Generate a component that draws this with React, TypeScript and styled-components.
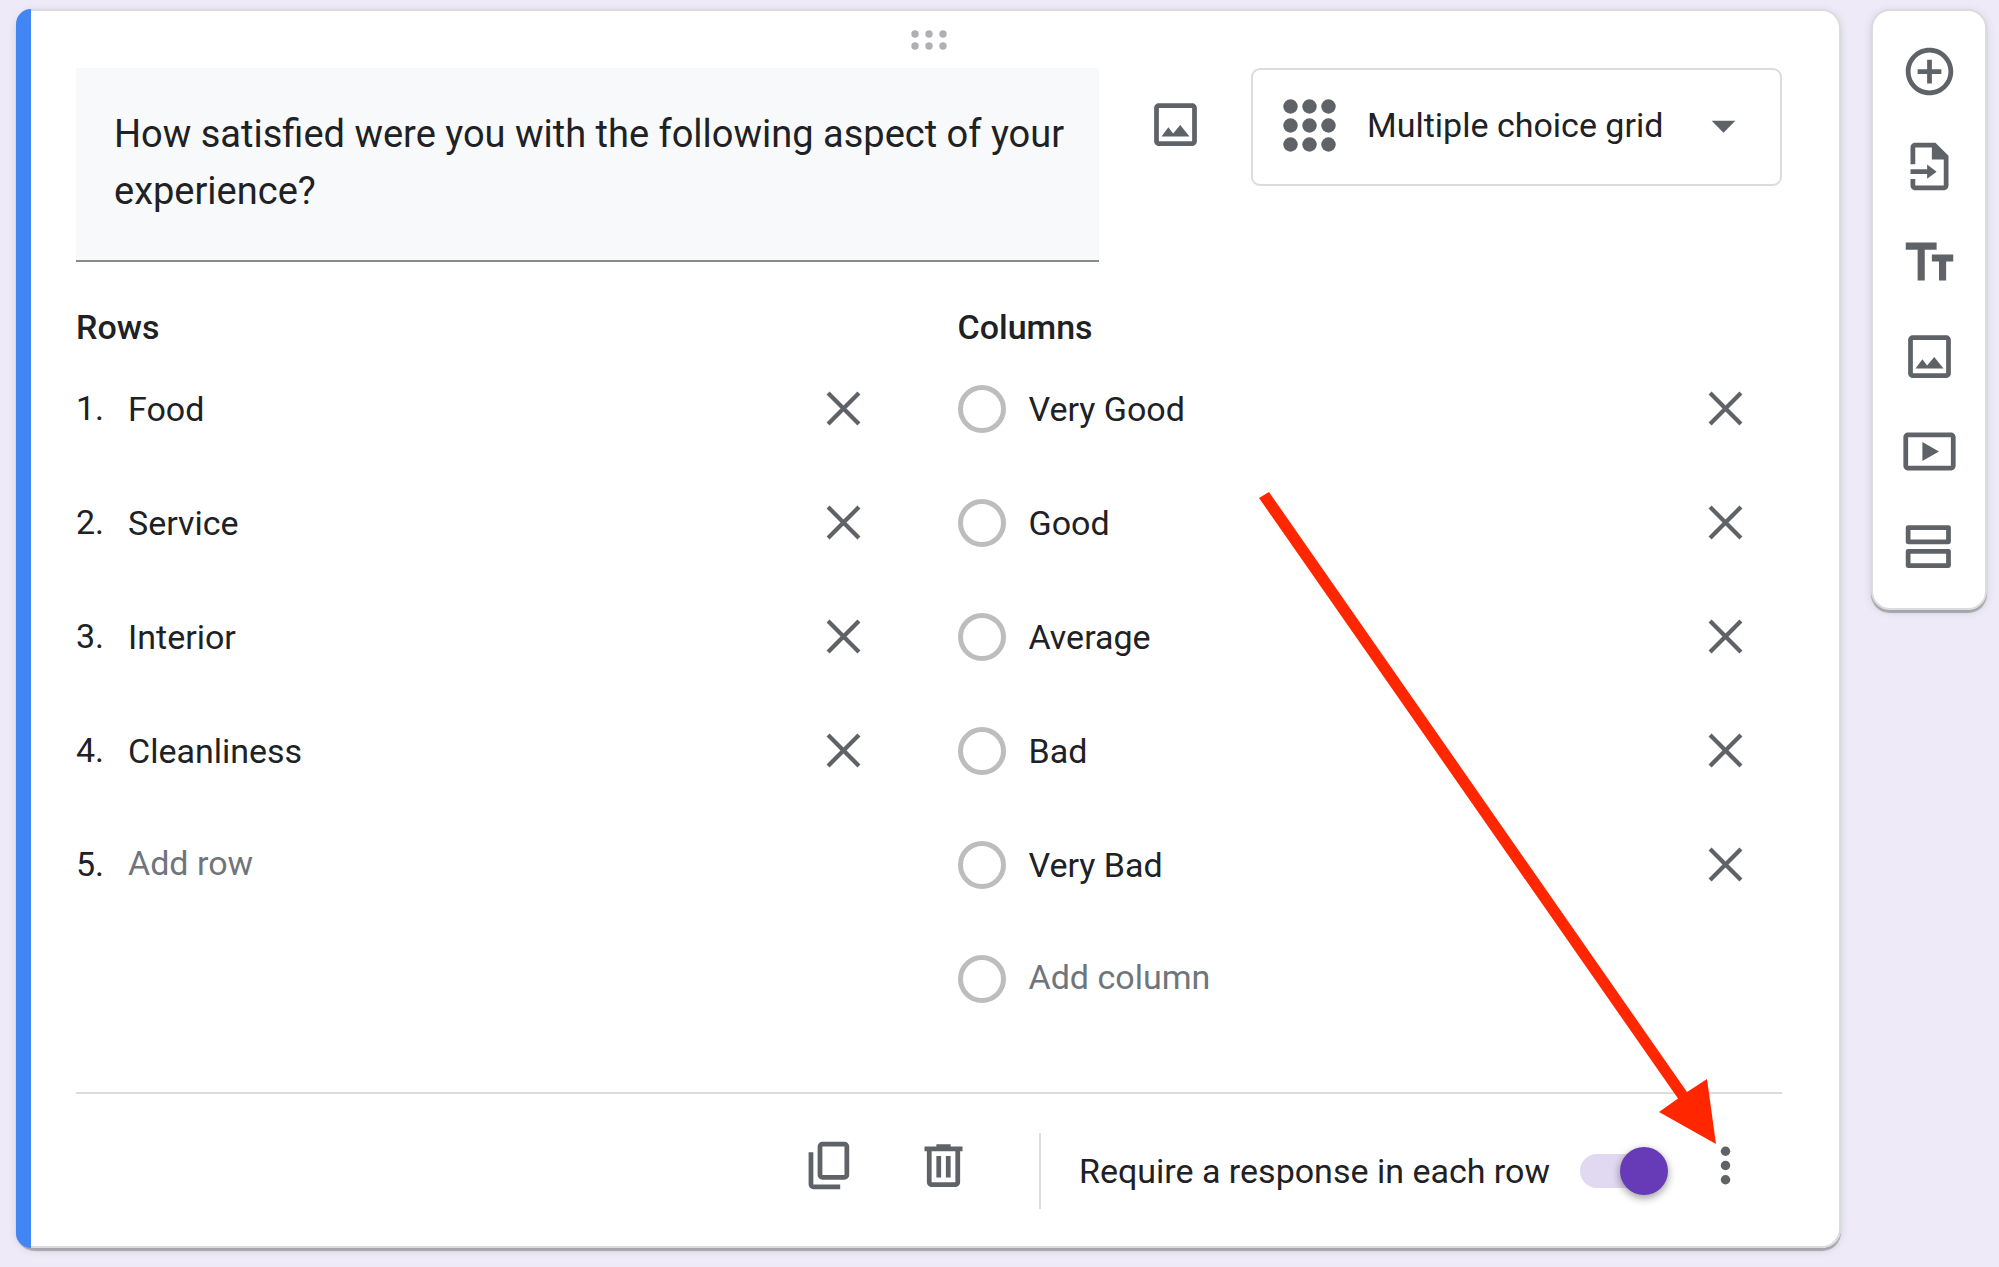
import React, { useState } from "react";
import styled, { createGlobalStyle } from "styled-components";

const ink = "#202124";
const iconGrey = "#5f6368";
const hint = "#70757a";
const line = "#dadce0";
const accent = "#673ab7";

const GlobalStyle = createGlobalStyle`
  *, *::before, *::after { box-sizing: border-box; }
  body {
    margin: 0;
    background: #eeeaf8;
    color: ${ink};
    font-family: Roboto, "Liberation Sans", sans-serif;
    font-size: 34px;
  }
  button, input, select, textarea { font: inherit; color: inherit; }
`;

const Page = styled.div`
  position: relative;
  display: flex;
  align-items: flex-start;
  gap: 30px;
  padding: 9px 12px 16px 16px;
`;

const Card = styled.main`
  display: flex;
  flex: 1;
  min-width: 0;
  border-radius: 19px;
  box-shadow: 0 3px 1px #a6a5ac, 0 2px 8px rgba(60, 64, 67, 0.15);
`;

const Stripe = styled.div`
  width: 15px;
  border-radius: 19px 0 0 19px;
  background: #4285f4;
`;

const CardBody = styled.div`
  flex: 1;
  min-width: 0;
  padding: 0 57px 0 45px;
  background: #fff;
  border: 2px solid ${line};
  border-left: 0;
  border-radius: 0 19px 19px 0;
`;

const DragHandle = styled.div`
  display: flex;
  align-items: center;
  justify-content: center;
  height: 57px;
`;

const Header = styled.div`
  display: flex;
  align-items: flex-start;
  gap: 19px;
`;

const Question = styled.textarea`
  display: block;
  flex: 1;
  min-width: 0;
  padding: 38px 19px 40px 38px;
  border: 0;
  border-bottom: 2px solid #87898d;
  border-radius: 0;
  background: #f8f9fa;
  font-size: 38px;
  line-height: 57px;
  resize: none;
  overflow: hidden;
  outline: none;
`;

const IconButton = styled.button`
  display: flex;
  flex: none;
  align-items: center;
  justify-content: center;
  width: 114px;
  height: 114px;
  padding: 0 0 2px;
  border: 0;
  background: none;
  color: ${iconGrey};
  cursor: pointer;
`;

const TypePicker = styled.div`
  display: grid;
  grid-template-columns: 114px 1fr;
  align-items: center;
  width: 531px;
  height: 118px;
  padding-bottom: 4px;
  border: 2px solid ${line};
  border-radius: 9px;
  color: ${iconGrey};

  > svg { grid-row: 1; pointer-events: none; }
  > svg:first-child { grid-column: 1; margin-left: 28px; }
  > svg:last-child { grid-column: 2; justify-self: end; margin-right: 28px; }
`;

const TypeSelect = styled.select`
  grid-row: 1;
  grid-column: 1 / -1;
  height: 100%;
  padding: 0 90px 0 114px;
  border: 0;
  background: transparent;
  color: ${ink};
  appearance: none;
  outline: none;
`;

const Lists = styled.div`
  display: grid;
  grid-template-columns: 1fr 1fr;
  gap: 57px;
  padding-top: 41px;
`;

const Heading = styled.h2`
  margin: 0;
  font-size: 34px;
  line-height: 49px;
  font-weight: 500;
`;

const List = styled.ul`
  margin: 0;
  padding: 0;
  list-style: none;
`;

const Item = styled.li`
  display: flex;
  align-items: center;
  height: 114px;
`;

const Num = styled.span`
  width: 52px;
  padding-bottom: 2px;
`;

const Radio = styled.input`
  appearance: none;
  flex: none;
  width: 48px;
  height: 48px;
  margin: 0 23px 0 0;
  border: 5px solid #bdbdbd;
  border-radius: 50%;
`;

const OptionInput = styled.input`
  flex: 1;
  min-width: 0;
  height: 57px;
  padding: 0;
  border: 0;
  background: none;
  outline: none;
`;

const AddButton = styled.button`
  padding: 0 0 4px;
  border: 0;
  background: none;
  color: ${hint};
  cursor: pointer;
`;

const Footer = styled.footer`
  display: flex;
  align-items: flex-start;
  justify-content: flex-end;
  margin-top: 56px;
  padding: 15px 0 13px;
  border-top: 2px solid ${line};
`;

const Require = styled.label`
  display: flex;
  align-items: center;
  height: 124px;
  margin-left: 38px;
  cursor: pointer;

  &::before {
    content: "";
    width: 2px;
    height: 76px;
    margin-right: 38px;
    background: ${line};
  }
`;

const Toggle = styled.input`
  appearance: none;
  display: flex;
  align-items: center;
  width: 88px;
  height: 48px;
  margin: 0 0 0 30px;
  cursor: pointer;

  &::before {
    content: "";
    width: 83px;
    height: 34px;
    border-radius: 17px;
    background: #e1d8f1;
  }
  &::after {
    content: "";
    width: 48px;
    height: 48px;
    margin-left: -83px;
    border-radius: 50%;
    background: #fafafa;
    box-shadow: 0 3px 8px rgba(0, 0, 0, 0.4);
  }
  &:checked::after { margin-left: -43px; background: ${accent}; }
`;

const Toolbar = styled.aside`
  display: flex;
  flex-direction: column;
  gap: 38px;
  align-items: center;
  width: 116px;
  padding: 33px 0 32px;
  border: 2px solid ${line};
  border-radius: 19px;
  background: #fff;
  box-shadow: 0 3px 1px #a6a5ac, 0 2px 8px rgba(60, 64, 67, 0.15);
`;

const ToolButton = styled(IconButton)`
  width: 57px;
  height: 57px;
`;

const Arrow = styled.svg`
  position: absolute;
  top: 492px;
  right: 282px;
  pointer-events: none;
`;

const Icon = ({ children }: { children: React.ReactNode }) => (
  <svg width="57" height="57" viewBox="0 0 24 24" fill="currentColor" aria-hidden="true">
    {children}
  </svg>
);

const ImageIcon = () => (
  <Icon>
    <path d="M19 5v14H5V5h14m0-2H5c-1.100 0-2 .9-2 2v14c0 1.100.9 2 2 2h14c1.100 0 2-.9 2-2V5c0-1.100-.9-2-2-2z" />
    <path d="M14 12.200l-3 3.600-2-2.600L6.100 17h11.800z" />
  </Icon>
);

const CloseIcon = () => (
  <Icon>
    <path d="M5.500 5.500l13 13M18.500 5.500l-13 13" stroke="currentColor" strokeWidth="1.800" />
  </Icon>
);

const DropIcon = () => (
  <Icon>
    <path d="M7 10l5 5 5-5z" />
  </Icon>
);

const GridIcon = () => (
  <Icon>
    {[4, 12, 20].map((y) => [4, 12, 20].map((x) => <circle key={`${x}-${y}`} cx={x} cy={y} r="3.050" />))}
  </Icon>
);

const MoreIcon = () => (
  <Icon>
    {[6, 12, 18].map((y) => <circle key={y} cx="12" cy={y} r="2" />)}
  </Icon>
);

const CopyIcon = () => (
  <Icon>
    <path
      fillRule="evenodd"
      d="M9 2h9.300a2 2 0 0 1 2 2v12a2 2 0 0 1-2 2H9a2 2 0 0 1-2-2V4a2 2 0 0 1 2-2zm0 2v12h9.300V4z"
    />
    <path d="M3.200 6.400h2V20h11.300v2H5.200a2 2 0 0 1-2-2z" />
  </Icon>
);

const TrashIcon = () => (
  <Icon>
    <path d="M15 4V3H9v1H4v2h1v13c0 1.100.9 2 2 2h10c1.100 0 2-.9 2-2V6h1V4h-5zm2 15H7V6h10v13z" />
    <path d="M9 8h2v9H9zM13 8h2v9h-2z" />
  </Icon>
);

const tools = [
  {
    label: "Add question",
    icon: (
      <Icon>
        <path d="M13 7h-2v4H7v2h4v4h2v-4h4v-2h-4V7zm-1-5C6.480 2 2 6.480 2 12s4.480 10 10 10 10-4.480 10-10S17.520 2 12 2zm0 18c-4.410 0-8-3.590-8-8s3.590-8 8-8 8 3.590 8 8-3.590 8-8 8z" />
      </Icon>
    ),
  },
  {
    label: "Import questions",
    icon: (
      <Icon>
        <path d="M4 11V4c0-1.100.9-2 2-2h8.500L20 7.500V20c0 1.100-.9 2-2 2H6c-1.100 0-2-.9-2-2v-2.700h2V20h12V9h-5V4H6v7z" />
        <path d="M4 13.200h7V11.200l4 3-4 3v-2H4z" />
      </Icon>
    ),
  },
  {
    label: "Add title and description",
    icon: (
      <Icon>
        <path d="M2 4v3h5v13h3V7h5V4H2zm20 5h-9v3h3v8h3v-8h3V9z" />
      </Icon>
    ),
  },
  { label: "Add image", icon: <ImageIcon /> },
  {
    label: "Add video",
    icon: (
      <Icon>
        <path d="M9 8v8l7-4z" />
        <path d="M21 4H3c-1.100 0-2 .9-2 2v12c0 1.100.9 2 2 2h18c1.100 0 2-.9 2-2V6c0-1.100-.9-2-2-2zm0 14H3V6h18v12z" />
      </Icon>
    ),
  },
  {
    label: "Add section",
    icon: (
      <Icon>
        <path
          fillRule="evenodd"
          d="M3 3h17a1 1 0 0 1 1 1v6a1 1 0 0 1-1 1H3a1 1 0 0 1-1-1V4a1 1 0 0 1 1-1zm1 2v4h15V5zM3 13h17a1 1 0 0 1 1 1v6a1 1 0 0 1-1 1H3a1 1 0 0 1-1-1v-6a1 1 0 0 1 1-1zm1 2v4h15v-4z"
        />
      </Icon>
    ),
  },
];

const rows = ["Food", "Service", "Interior", "Cleanliness"];
const columns = ["Very Good", "Good", "Average", "Bad", "Very Bad"];

export default function App() {
  const [required, setRequired] = useState(true);

  return (
    <>
      <GlobalStyle />
      <Page>
        <Card>
          <Stripe />
          <CardBody>
            <DragHandle>
              <svg width="36" height="20" viewBox="0 0 36 20" fill="#b0b0b4" aria-hidden="true">
                {[4, 16].map((y) => [4, 18, 32].map((x) => <circle key={`${x}-${y}`} cx={x} cy={y} r="3.700" />))}
              </svg>
            </DragHandle>
            <Header>
              <Question
                aria-label="Question"
                rows={2}
                defaultValue="How satisfied were you with the following aspect of your experience?"
              />
              <IconButton type="button" aria-label="Add image to question">
                <ImageIcon />
              </IconButton>
              <TypePicker>
                <GridIcon />
                <TypeSelect aria-label="Question type" defaultValue="grid">
                  <option value="grid">Multiple choice grid</option>
                </TypeSelect>
                <DropIcon />
              </TypePicker>
            </Header>
            <Lists>
              <section>
                <Heading>Rows</Heading>
                <List>
                  {rows.map((row, i) => (
                    <Item key={row}>
                      <Num>{i + 1}.</Num>
                      <OptionInput aria-label={`Row ${i + 1}`} defaultValue={row} />
                      <IconButton type="button" aria-label={`Remove ${row}`}>
                        <CloseIcon />
                      </IconButton>
                    </Item>
                  ))}
                  <Item>
                    <Num>{rows.length + 1}.</Num>
                    <AddButton type="button">Add row</AddButton>
                  </Item>
                </List>
              </section>
              <section>
                <Heading>Columns</Heading>
                <List>
                  {columns.map((column, i) => (
                    <Item key={column}>
                      <Radio type="radio" disabled aria-label={column} />
                      <OptionInput aria-label={`Column ${i + 1}`} defaultValue={column} />
                      <IconButton type="button" aria-label={`Remove ${column}`}>
                        <CloseIcon />
                      </IconButton>
                    </Item>
                  ))}
                  <Item>
                    <Radio type="radio" disabled aria-label="New column" />
                    <AddButton type="button">Add column</AddButton>
                  </Item>
                </List>
              </section>
            </Lists>
            <Footer>
              <IconButton type="button" aria-label="Duplicate">
                <CopyIcon />
              </IconButton>
              <IconButton type="button" aria-label="Delete">
                <TrashIcon />
              </IconButton>
              <Require>
                Require a response in each row
                <Toggle type="checkbox" checked={required} onChange={(e) => setRequired(e.target.checked)} />
              </Require>
              <IconButton type="button" aria-label="More options">
                <MoreIcon />
              </IconButton>
            </Footer>
          </CardBody>
        </Card>
        <Toolbar aria-label="Add to form">
          {tools.map((tool) => (
            <ToolButton key={tool.label} type="button" aria-label={tool.label}>
              {tool.icon}
            </ToolButton>
          ))}
        </Toolbar>
        <Arrow width="458" height="652" viewBox="0 0 458 652" fill="#ff2600" aria-hidden="true">
          <path d="M0 6L10 0L428 600L448 587L457 652L400 620L419 606.500z" />
        </Arrow>
      </Page>
    </>
  );
}
